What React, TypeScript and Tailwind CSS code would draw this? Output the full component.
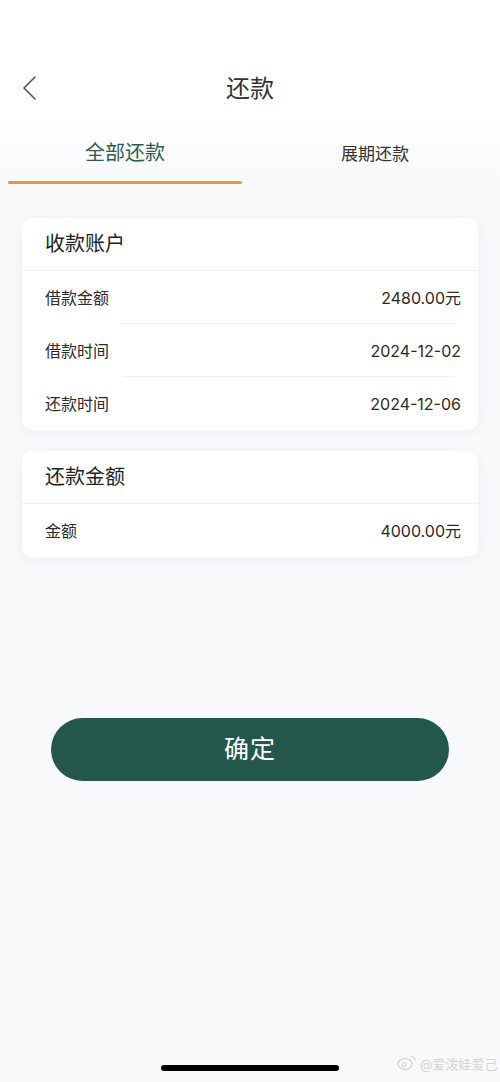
import { useState } from "react";

const font = "font-['Inter','Noto_Sans_CJK_SC','Noto_Sans',sans-serif]";

type Row = { label: string; value: string };

function InfoCard({ title, rows }: { title: string; rows: Row[] }) {
  return (
    <div className="mx-[22px] rounded-[10px] bg-white shadow-[0_2px_14px_rgba(30,40,60,0.05)]">
      <div className="flex h-[53px] items-center border-b border-[#eef0f3] pl-[23px] text-[20px] text-[#222]">
        {title}
      </div>
      {rows.map((r, i) => (
        <div key={r.label} className="relative flex h-[53px] items-center justify-between pl-[23px] pr-[17px] text-[16px] text-[#2a2a2a]">
          <span>{r.label}</span>
          <span>{r.value}</span>
          {i < rows.length - 1 ? (
            <div className="absolute bottom-0 left-[100px] right-[23px] h-px bg-[#eef0f3]" />
          ) : null}
        </div>
      ))}
    </div>
  );
}

export default function App() {
  const [tab, setTab] = useState(0);
  const tabs = ["全部还款", "展期还款"];

  return (
    <div className={`flex min-h-[1082px] w-[500px] flex-col bg-[#f8f9fb] ${font}`}>
      <div className="h-[58px] bg-white" />
      <div className="relative flex h-[59px] items-center justify-center bg-white">
        <svg className="absolute left-[20px] top-[16px]" width="18" height="28" viewBox="0 0 18 28" fill="none">
          <path d="M15 3 L4 14 L15 25" stroke="#555" strokeWidth="1.6" strokeLinecap="round" strokeLinejoin="round" />
        </svg>
        <span className="mt-[3px] text-[24px] text-[#333]">还款</span>
      </div>

      <div className="flex h-[68px] bg-gradient-to-b from-white to-[#f8f9fb]">
        {tabs.map((t, i) => (
          <button
            key={t}
            type="button"
            onClick={() => setTab(i)}
            className="flex flex-1 flex-col items-center px-2"
          >
            <span
              className={
                i === tab
                  ? "mt-[21px] text-[20px] leading-[30px] text-[#2c5b4f]"
                  : "mt-[23px] text-[17px] leading-[28px] text-[#333]"
              }
            >
              {t}
            </span>
            {i === tab ? <span className="mt-auto mb-[1px] h-[3px] w-full rounded-full bg-[#e8963a]" /> : null}
          </button>
        ))}
      </div>

      <div className="mt-[33px]">
        <InfoCard
          title="收款账户"
          rows={[
            { label: "借款金额", value: "2480.00元" },
            { label: "借款时间", value: "2024-12-02" },
            { label: "还款时间", value: "2024-12-06" },
          ]}
        />
      </div>
      <div className="mt-[21px]">
        <InfoCard title="还款金额" rows={[{ label: "金额", value: "4000.00元" }]} />
      </div>

      <button
        type="button"
        className="mx-[51px] mt-[161px] flex h-[63px] items-center justify-center rounded-full bg-[#23574c] text-[25px] tracking-[1px] text-white"
      >
        确定
      </button>

      <div className="mt-auto flex h-[30px] items-end justify-center pb-[11px]">
        <div className="relative h-[6px] w-[178px] rounded-full bg-black">
          <svg className="absolute left-[236px] top-[-11px]" width="20" height="17" viewBox="0 0 20 17" fill="none">
            <ellipse cx="8" cy="10" rx="7" ry="5.5" stroke="#d6d6d6" strokeWidth="1.4" />
            <circle cx="7" cy="10.5" r="2" stroke="#d6d6d6" strokeWidth="1.2" />
            <path d="M14 2.5 a4 4 0 0 1 4 4" stroke="#d6d6d6" strokeWidth="1.3" strokeLinecap="round" />
          </svg>
          <span className="absolute left-[259px] top-[-10px] whitespace-nowrap text-[13px] text-[#d4d4d4]">
            @爱泼娃爱己
          </span>
        </div>
      </div>
    </div>
  );
}
